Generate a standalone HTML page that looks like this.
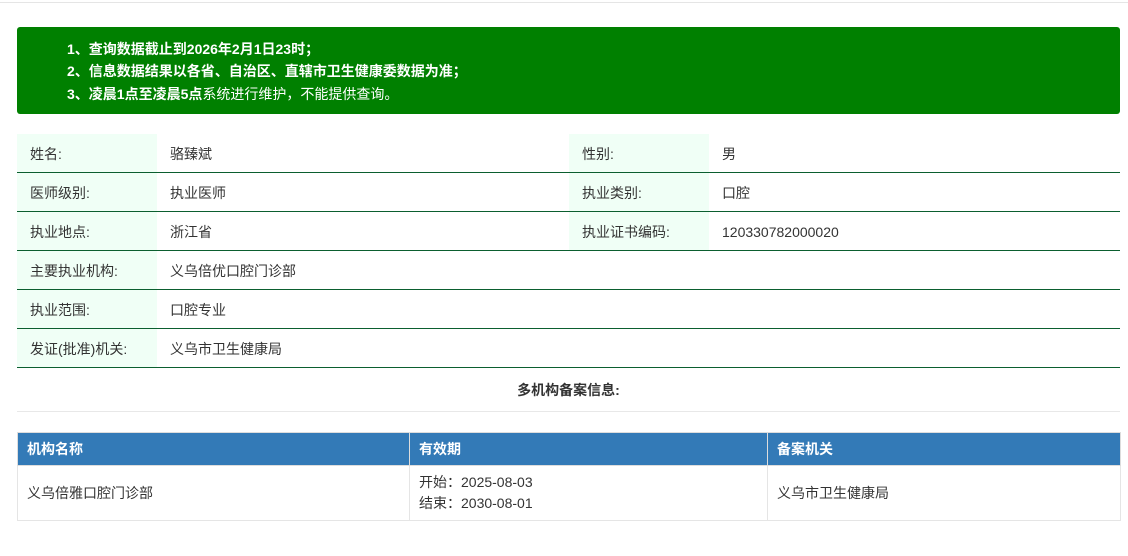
<!DOCTYPE html>
<html><head><style>
body{margin:0;width:1128px;height:556px;background:#fff;font-family:"Liberation Sans","Noto Sans CJK SC",sans-serif;font-size:14px;color:#333;position:relative;overflow:hidden}
.top{position:absolute;left:0;top:2px;width:1128px;border-top:1px solid #e5e5e5}
.note{position:absolute;left:17px;top:27px;width:1103px;height:87px;background:#008000;border-radius:3px;color:#fff;font-weight:bold}
.note div{position:absolute;left:50px;font-size:14px;line-height:20px}
.row{position:absolute;left:17px;width:1103px;height:38px;border-bottom:1px solid #0b5e2f}
.l{position:absolute;top:0;height:38px;width:140px;background:#f0fff6;line-height:40px;padding-left:13px;box-sizing:border-box}
.v{position:absolute;top:0;line-height:40px}
table{position:absolute;left:17px;top:432px;width:1104px;border-collapse:collapse;font-size:14px}
th{background:#337ab7;color:#fff;text-align:left;height:32px;padding:0 9px;border:1px solid #ddd;font-weight:bold}
td{height:54px;padding:0 9px;border:1px solid #e5e5e5;line-height:21px}
</style></head><body>
<div class="top"></div>
<div class="note">
<div style="top:12px">1、查询数据截止到2026年2月1日23时；</div>
<div style="top:34px">2、信息数据结果以各省、自治区、直辖市卫生健康委数据为准；</div>
<div style="top:57px">3、凌晨1点至凌晨5点<span style="font-weight:normal">系统进行维护，不能提供查询。</span></div>
</div>
<div class="row" style="top:134px"><div class="l" style="left:0">姓名:</div><div class="v" style="left:153px">骆臻斌</div><div class="l" style="left:552px">性别:</div><div class="v" style="left:705px">男</div></div>
<div class="row" style="top:173px"><div class="l" style="left:0">医师级别:</div><div class="v" style="left:153px">执业医师</div><div class="l" style="left:552px">执业类别:</div><div class="v" style="left:705px">口腔</div></div>
<div class="row" style="top:212px"><div class="l" style="left:0">执业地点:</div><div class="v" style="left:153px">浙江省</div><div class="l" style="left:552px">执业证书编码:</div><div class="v" style="left:705px">120330782000020</div></div>
<div class="row" style="top:251px"><div class="l" style="left:0">主要执业机构:</div><div class="v" style="left:153px">义乌倍优口腔门诊部</div></div>
<div class="row" style="top:290px"><div class="l" style="left:0">执业范围:</div><div class="v" style="left:153px">口腔专业</div></div>
<div class="row" style="top:329px"><div class="l" style="left:0">发证(批准)机关:</div><div class="v" style="left:153px">义乌市卫生健康局</div></div>
<div style="position:absolute;left:17px;top:379px;width:1103px;text-align:center;font-weight:bold;line-height:22px">多机构备案信息:</div>
<div style="position:absolute;left:17px;top:411px;width:1103px;border-top:1px solid #e8e8e8"></div>
<table><tr><th style="width:373px">机构名称</th><th style="width:339px">有效期</th><th>备案机关</th></tr>
<tr><td>义乌倍雅口腔门诊部</td><td>开始：2025-08-03<br>结束：2030-08-01</td><td>义乌市卫生健康局</td></tr></table>
</body></html>
